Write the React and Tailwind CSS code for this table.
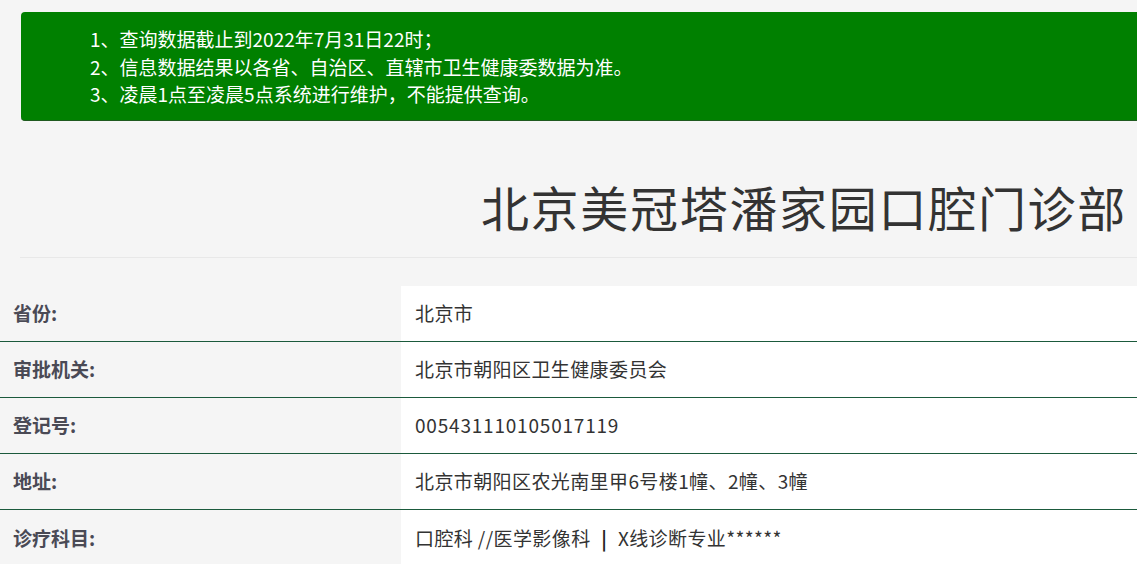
const rows = [
  { label: '省份:', value: '北京市' },
  { label: '审批机关:', value: '北京市朝阳区卫生健康委员会' },
  { label: '登记号:', value: '005431110105017119', mono: true },
  { label: '地址:', value: '北京市朝阳区农光南里甲6号楼1幢、2幢、3幢' },
];

export default function App() {
  return (
    <div
      className="min-h-screen w-full overflow-hidden bg-[#f5f5f5]"
      style={{ fontFamily: '"Noto Sans CJK SC", "Noto Sans", sans-serif' }}
    >
      {/* notice */}
      <div className="ml-[21px] mt-[12px] h-[109px] w-[1140px] rounded-[4px] border-b border-[#1f5a1f] bg-[#008000] pl-[69px] pt-[13px] text-[19px] leading-[27.5px] text-white">
        <p>1、查询数据截止到2022年7月31日22时；</p>
        <p>2、信息数据结果以各省、自治区、直辖市卫生健康委数据为准。</p>
        <p>3、凌晨1点至凌晨5点系统进行维护，不能提供查询。</p>
      </div>

      {/* title */}
      <div className="mt-[55px] flex h-[60px] items-center justify-end pr-[10px]">
        <h1 className="whitespace-nowrap text-[48px] font-normal leading-none tracking-[1.7px] text-[#333]">
          北京美冠塔潘家园口腔门诊部
        </h1>
      </div>
      <div className="ml-[20px] mt-[21px] h-px bg-[#e8e8e8]" />

      {/* info table */}
      <div className="mt-[28px]">
        {rows.map((r) => (
          <div key={r.label} className="flex h-[56px] border-b border-[#1b5a3c]">
            <div className="flex w-[401px] shrink-0 items-center pl-[13px] text-[19px] font-bold text-[#4a4a55]">
              {r.label}
            </div>
            <div
              className={`flex flex-1 items-center bg-white pl-[14px] text-[19px] text-[#333] ${
                r.mono ? 'tracking-[0.8px]' : 'tracking-[0.4px]'
              }`}
            >
              {r.value}
            </div>
          </div>
        ))}
        <div className="flex h-[56px]">
          <div className="flex w-[401px] shrink-0 items-center pl-[13px] text-[19px] font-bold text-[#4a4a55]">
            诊疗科目:
          </div>
          <div className="flex flex-1 items-center whitespace-pre bg-white pl-[14px] text-[19px] tracking-[0.4px] text-[#333]">
            口腔科 //医学影像科 <span className="mx-[6px] font-bold text-[#222]">|</span> X线诊断专业******
          </div>
        </div>
      </div>
    </div>
  );
}
